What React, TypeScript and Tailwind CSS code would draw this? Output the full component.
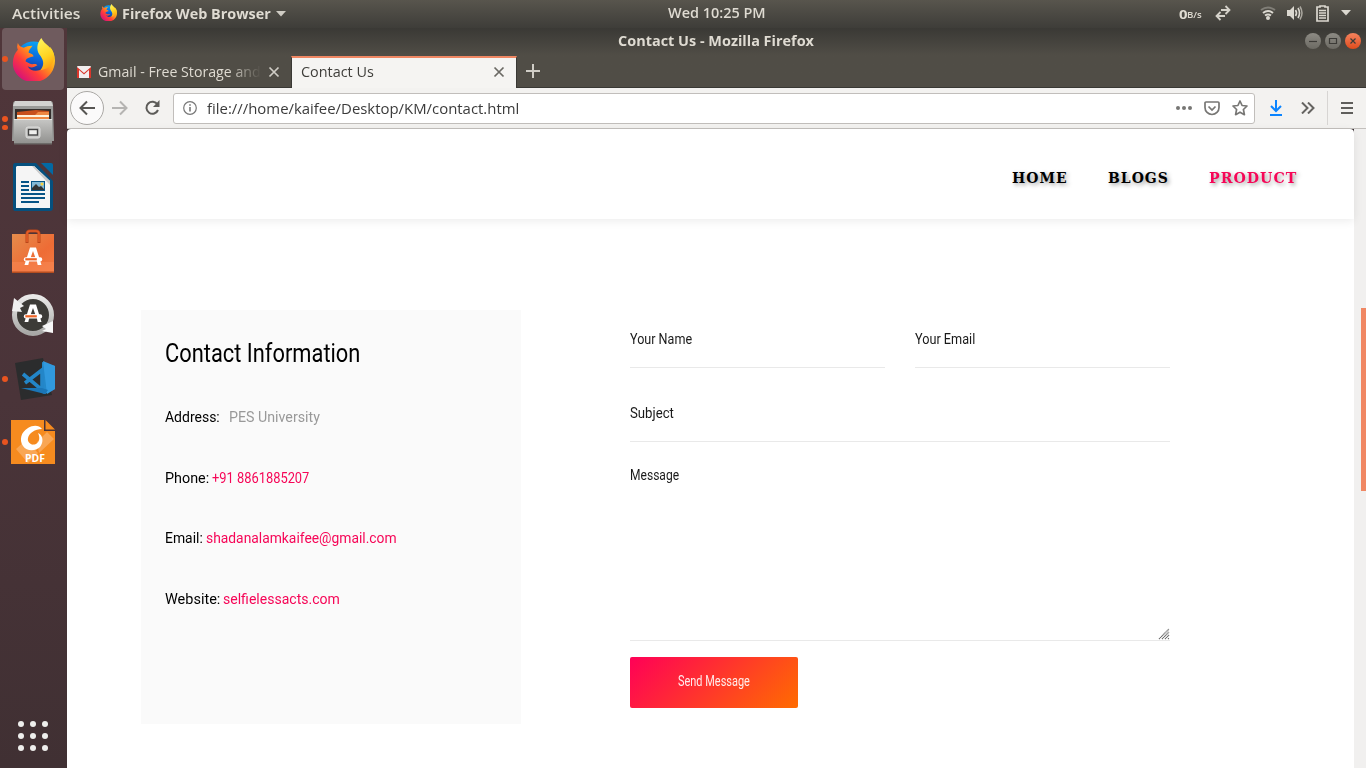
import { useLayoutEffect, useRef, useState } from 'react';
import type { ReactNode } from 'react';

/* Text set to an exact advance width by horizontal scaling. */
function Fit({ w, className = '', children }: { w: number; className?: string; children: ReactNode }) {
  const ref = useRef<HTMLSpanElement>(null);
  const [scale, setScale] = useState(1);
  useLayoutEffect(() => {
    if (ref.current && ref.current.offsetWidth) setScale(w / ref.current.offsetWidth);
  }, [w]);
  return (
    <span className={`block shrink-0 whitespace-pre ${className}`} style={{ width: w }}>
      <span ref={ref} className="inline-block origin-left" style={{ transform: `scaleX(${scale})` }}>
        {children}
      </span>
    </span>
  );
}

function FirefoxLogo({ size, id }: { size: number; id: string }) {
  return (
    <svg width={size} height={size} viewBox="0 0 44 44" className="shrink-0">
      <defs>
        <linearGradient id={`${id}a`} x1="0.9" y1="0.15" x2="0.15" y2="0.9">
          <stop offset="0" stopColor="#ffe226" />
          <stop offset="0.35" stopColor="#ff9a1a" />
          <stop offset="0.65" stopColor="#ff3d3a" />
          <stop offset="1" stopColor="#d6107a" />
        </linearGradient>
        <linearGradient id={`${id}b`} x1="0.6" y1="0" x2="0.4" y2="1">
          <stop offset="0" stopColor="#0aa5f5" />
          <stop offset="0.5" stopColor="#0a62d8" />
          <stop offset="1" stopColor="#2b1d6b" />
        </linearGradient>
        <linearGradient id={`${id}c`} x1="0.3" y1="0" x2="0.6" y2="1">
          <stop offset="0" stopColor="#fff45a" />
          <stop offset="0.6" stopColor="#ffd21f" />
          <stop offset="1" stopColor="#ff9b12" />
        </linearGradient>
      </defs>
      <circle cx="22" cy="22" r="18.5" fill={`url(#${id}b)`} />
      <path
        d="M6 5C5 9 5 10 6 12C1 17-1 27 3 34C7 42 15 45 22 45C35 45 44 35 44 23C44 18 42 13 39 9C40 17 38 26 33 30C28 35 19 35 16 29C19 31 23 30 26 28C24 25 21 28 18 26L14 24C14 21 17 20 22 19C22 16 19 16 17 15C17 12 19 11 21 8C17 8 14 9 12 10C9 9 7 8 6 5Z"
        fill={`url(#${id}a)`}
      />
      <path d="M30 0C25 6 25 12 28 17C32 22 34 27 29 33C38 32 44 26 43 18C42 9 33 7 30 0Z" fill={`url(#${id}c)`} />
    </svg>
  );
}

function Files() {
  return (
    <svg width="44" height="46" viewBox="0 0 44 46">
      <defs>
        <linearGradient id="cab" x1="0" y1="0" x2="0" y2="1">
          <stop offset="0" stopColor="#c7c7c5" />
          <stop offset="1" stopColor="#929290" />
        </linearGradient>
      </defs>
      <path d="M2 4Q2 1 5 1H39Q42 1 42 4L43 41H1Z" fill="#999a98" />
      <path d="M4 1H40L42 6H2Z" fill="#d2d2d0" />
      <rect x="4" y="9" width="36" height="11" fill="#332e2c" />
      <path d="M6 12L25 10L38 11V20H6Z" fill="#c8501d" />
      <path d="M6 15H24L27 12H38V20H6Z" fill="#ee8742" />
      <rect x="6" y="15" width="32" height="2" fill="#fff2dc" />
      <path d="M3 19H41V43H3Z" fill="url(#cab)" />
      <path d="M3 19.5H41" stroke="#e5e5e3" />
      <rect x="3" y="43" width="38" height="1.5" fill="#6d6b69" />
      <rect x="15" y="27" width="14" height="11" rx="2" fill="#c7c7c5" stroke="#dededd" />
      <rect x="17.5" y="29.5" width="9" height="5.5" fill="#efefed" stroke="#454545" strokeWidth="1.4" />
    </svg>
  );
}

function Writer() {
  return (
    <svg width="42" height="48" viewBox="0 0 42 48">
      <path d="M3 0H24L41 18V45Q41 48 38 48H3Q1 48 1 45V3Q1 0 3 0Z" fill="#05507e" />
      <path d="M29 0H39Q41 0 41 2V12Z" fill="#0369a3" />
      <path d="M5 3H22L38 18V45H4V4Z" fill="#f5f5f5" />
      <path d="M22 3L38 18V22L20 3Z" fill="#c9c9c9" />
      <g fill="#075486">
        <rect x="9" y="18" width="8" height="2" /><rect x="9" y="22" width="8" height="2" />
        <rect x="9" y="26" width="8" height="2" /><rect x="9" y="30" width="24" height="2" />
        <rect x="9" y="34" width="24" height="2" /><rect x="9" y="38" width="18" height="2" />
        <rect x="19" y="18" width="14" height="10" />
      </g>
      <rect x="20" y="19" width="12" height="8" fill="#84b9d6" />
      <circle cx="30" cy="21" r="1.5" fill="#f8d03c" />
      <path d="M20 27V25L24 21L27 24L29 23L32 26V27Z" fill="#333" />
    </svg>
  );
}

function StoreMark() {
  return (
    <>
      <path d="M-8.5 9L-3 -8.500H3L8.500 9H4.700L3.800 5H-3.800L-4.700 9ZM-2.300 1.500H2.300L0 -5Z" fill="#fff" />
      <rect x="-9.200" y="1.200" width="18.400" height="4.200" rx="2" fill="#fff" />
      <rect x="-7.700" y="2.200" width="11.500" height="2.200" fill="#ee6427" />
    </>
  );
}

function Software() {
  return (
    <svg width="44" height="46" viewBox="0 0 44 46" className="mt-[2px]">
      <defs>
        <linearGradient id="bag" x1="0" y1="0" x2="1" y2="1">
          <stop offset="0" stopColor="#e58c4c" />
          <stop offset="0.6" stopColor="#ee6c35" />
          <stop offset="1" stopColor="#f27a43" />
        </linearGradient>
      </defs>
      <rect x="1" y="5" width="42" height="39" fill="url(#bag)" />
      <rect x="1" y="33" width="42" height="10" fill="#fa8a55" opacity=".5" />
      <rect x="1" y="42.5" width="42" height="1.5" fill="#b44d20" />
      <path d="M16 14V5Q16 2 19 2H25Q28 2 28 5V14" fill="none" stroke="#b94619" strokeWidth="3" />
      <path d="M16 13V5Q16 2 19 2H25Q28 2 28 5V13" fill="none" stroke="#e35d28" strokeWidth="1.6" />
      <g transform="translate(22 27)"><StoreMark /></g>
    </svg>
  );
}

function Updater() {
  return (
    <svg width="44" height="44" viewBox="0 0 44 44">
      <defs>
        <linearGradient id="ring" x1="0" y1="0" x2="0" y2="1">
          <stop offset="0" stopColor="#e9e9e8" />
          <stop offset="1" stopColor="#a8a8a6" />
        </linearGradient>
      </defs>
      <circle cx="22" cy="22" r="18.500" fill="#3c3b37" stroke="url(#ring)" strokeWidth="5" />
      <path d="M3 5L13 13L9 15L11 19L1 18Z" fill="#f0f0f0" />
      <path d="M42 28V40L31 38L35 36L31 33Z" fill="#f7f7f7" />
      <g transform="translate(22 20)"><StoreMark /></g>
    </svg>
  );
}

function Code() {
  return (
    <svg width="42" height="44" viewBox="0 0 42 44">
      <path d="M1 6L29 1L38 38L7 43Z" fill="#2b2c2d" />
      <path d="M28 5L41 9V32L31 37L28 36Z" fill="#2489ca" />
      <path d="M29 4L41 9V32L33 37Z" fill="#3199de" />
      <path d="M11 26L28 13V33L9 17" fill="none" stroke="#2386c8" strokeWidth="3.6" />
      <path d="M7 31L31 37L34 33L28 31Z" fill="#1b76b7" />
    </svg>
  );
}

function Foxit() {
  return (
    <svg width="44" height="44" viewBox="0 0 44 44">
      <path d="M0 0H33V11H44V44H0Z" fill="#f68b1f" />
      <path d="M34.500 0L44 9.500H34.500Z" fill="#f68b1f" />
      <path d="M5 29L15 20L27 33L17 43ZM26 22L36 12L43 19L28 33Z" fill="#f9a654" />
      <path
        d="M31 9C28 5 22 5 17 8C10 12 8 20 12 26C16 32 25 31 29 27C33 22 32 15 27 13C29 17 29 22 25 24C20 26 16 22 17 18C18 13 24 9 31 9Z"
        fill="#fff"
      />
      <path d="M20 22C23 22 25 20 26 16C28 21 25 25 20 24Z" fill="#f68b1f" />
      <text x="14" y="42" textLength="20" lengthAdjust="spacingAndGlyphs" fill="#fff" fontSize="11" fontWeight="700" fontFamily="Open Sans, sans-serif">PDF</text>
    </svg>
  );
}

function DockItem({ dots = 0, active = false, height, children }: { dots?: number; active?: boolean; height: string; children: ReactNode }) {
  return (
    <div className={`relative flex w-[62px] items-center justify-center rounded ${height} ${active ? 'bg-[#6f5b5e]' : ''}`}>
      {dots > 0 && (
        <div className="absolute inset-y-0 left-0 flex flex-col justify-center gap-[3px]">
          {Array.from({ length: dots }, (_, i) => <i key={i} className="block size-[5.500px] rounded-full bg-[#e95420]" />)}
        </div>
      )}
      {children}
    </div>
  );
}

function Dock() {
  return (
    <aside className="flex w-[67px] shrink-0 flex-col bg-linear-to-b from-[#50363a] via-[#4a3439] to-[#403033] pl-[2px]">
      <DockItem height="h-[62px]" dots={1} active><FirefoxLogo size={43} id="dock" /></DockItem>
      <DockItem height="h-[66px]" dots={2}><Files /></DockItem>
      <DockItem height="h-[62px]"><span className="-ml-[1px]"><Writer /></span></DockItem>
      <DockItem height="h-[66px]"><Software /></DockItem>
      <DockItem height="h-[62px]"><Updater /></DockItem>
      <DockItem height="h-[66px]" dots={1}><span className="pl-1"><Code /></span></DockItem>
      <DockItem height="h-[60px]" dots={1}><Foxit /></DockItem>
      <div className="mt-auto mb-[17px] ml-4 grid w-[30px] grid-cols-3 gap-[6px]">
        {Array.from({ length: 9 }, (_, i) => <i key={i} className="block size-[6px] rounded-full bg-[#eeeeec]" />)}
      </div>
    </aside>
  );
}

function TopBar() {
  return (
    <header className="flex h-[28px] shrink-0 items-center bg-linear-to-b from-[#58554d] to-[#3e3d39] pb-[1px] text-[14px] font-semibold text-[#dfdbd2]">
      <Fit w={68} className="ml-3">Activities</Fit>
      <span className="-mt-[2px] mr-[5px] ml-5"><FirefoxLogo size={17} id="bar" /></span>
      <Fit w={149} className="font-bold">Firefox Web Browser</Fit>
      <svg className="ml-[5px]" width="10" height="6"><path d="M0 0H10L5 5.500Z" fill="#cfccc4" /></svg>
      <Fit w={98} className="ml-[382px] -mt-[2px]">Wed 10:25 PM</Fit>
      <div className="ml-auto flex items-center">
        <Fit w={8} className="mt-[3px] text-[13px] font-bold">0</Fit>
        <Fit w={15} className="mt-[3px] text-[9px]">B/s</Fit>
        <svg className="-mt-[1px] ml-[13px]" width="16" height="16" viewBox="0 0 16 16" fill="none" stroke="#d5d2ca" strokeWidth="1.8">
          <path d="M6 5H14M10.500 1L14.500 5L10.500 9M10 11H2M5.500 7L1.500 11L5.500 15" />
        </svg>
        <svg className="-mt-[1px] ml-[29px]" width="16" height="16" viewBox="0 0 16 16" fill="none" strokeWidth="2">
          <path d="M1 5Q8 0 15 5" stroke="#807e77" />
          <path d="M3 8Q8 4 13 8M5 10.500Q8 8.500 11 10.500" stroke="#dbd8d0" />
          <circle cx="8" cy="13" r="2" fill="#dbd8d0" />
        </svg>
        <svg className="-mt-[1px] ml-[11px]" width="17" height="16" viewBox="0 0 17 16">
          <path d="M0 5H3L7 1V15L3 11H0Z" fill="#dbd8d0" />
          <path d="M8.500 5Q10.500 8 8.500 11M11 3Q14 8 11 13" fill="none" stroke="#dbd8d0" strokeWidth="1.6" />
          <path d="M13 1.500Q17 8 13 14.500" fill="none" stroke="#aaa79f" strokeWidth="1.5" />
        </svg>
        <svg className="-mt-[1px] ml-[12px]" width="13" height="17" viewBox="0 0 13 17">
          <path d="M4 2V1H9V2H12V16H1V2Z" fill="none" stroke="#dbd8d0" strokeWidth="1.700" />
          <path d="M3 5.500H10M3 8H10M3 10.500H10M3 13H10" stroke="#dbd8d0" strokeWidth="1.4" />
        </svg>
        <svg className="-mt-[1px] ml-3 mr-[15px]" width="10" height="6"><path d="M0 0H10L5 5.500Z" fill="#dbd8d0" /></svg>
      </div>
    </header>
  );
}

function WindowButtons() {
  return (
    <div className="-mt-[2px] mr-[5px] ml-auto flex gap-1">
      {['min', 'max', 'close'].map((k) => (
        <span key={k} className={`flex size-4 items-center justify-center rounded-full ${k === 'close' ? 'bg-linear-to-b from-[#f4825c] to-[#df4b18]' : 'bg-linear-to-b from-[#8d8b84] to-[#6c6a63]'}`}>
          <svg width="10" height="10" viewBox="0 0 10 10" fill="none" stroke="#3c3b37" strokeWidth="1.2">
            <path d={k === 'min' ? 'M1 5.500H9' : k === 'max' ? 'M1.500 2.500H8.500V7.500H1.500Z' : 'M2.500 2.500L7.500 7.500M7.500 2.500L2.500 7.500'} />
          </svg>
        </span>
      ))}
    </div>
  );
}

function Close({ color }: { color: string }) {
  return (
    <svg width="12" height="12" viewBox="0 0 12 12" fill="none" stroke={color} strokeWidth="1.700">
      <path d="M1.500 1.500L10.500 10.500M10.500 1.500L1.500 10.500" />
    </svg>
  );
}

function Tabs() {
  return (
    <div className="flex h-[32px] text-[14px]">
      <div className="flex w-[224px] shrink-0 items-center border-b border-[#393834] pl-[10px]">
        <svg width="14" height="12" viewBox="0 0 14 12">
          <rect width="14" height="12" rx="1" fill="#f1eeee" />
          <path d="M0 1L7 7L14 1V12H12V4L7 8.500L2 4V12H0Z" fill="#d9362b" />
        </svg>
        <div className="ml-[7px] mask-r-from-80% mask-r-to-100%">
          <Fit w={163} className="text-[#dfdbd2]">Gmail - Free Storage and</Fit>
        </div>
        <span className="ml-[7px]"><Close color="#d0cdc6" /></span>
      </div>
      <div className="flex w-[226px] shrink-0 items-center border-x border-t-2 border-x-[#393834] border-t-[#f08763] bg-[#f5f4f2] pb-[3px] pl-[9px] text-[#3f3e3a]">
        <Fit w={73}>Contact Us</Fit>
        <span className="mt-[1px] ml-[119px]"><Close color="#6b6964" /></span>
      </div>
      <div className="flex grow items-center border-b border-[#393834] pb-[1px] pl-[9px]">
        <svg width="14" height="14"><path d="M7 0V14M0 7H14" stroke="#d0cdc6" strokeWidth="2" /></svg>
      </div>
    </div>
  );
}

function Toolbar() {
  return (
    <div className="flex h-[41px] shrink-0 items-center border-b border-[#c3c0bd] bg-[#f3f2f0] pl-[3px]">
      <span className="flex size-[34px] shrink-0 items-center justify-center rounded-full border border-[#aaa8a5] bg-[#fbfafa]">
        <svg width="16" height="16" viewBox="0 0 16 16" fill="none" stroke="#575653" strokeWidth="2"><path d="M16 8H2M8 1.500L1.500 8L8 14.500" /></svg>
      </span>
      <svg className="ml-2" width="16" height="16" viewBox="0 0 16 16" fill="none" stroke="#b5b4b2" strokeWidth="2"><path d="M0 8H14M8 1.500L14.500 8L8 14.500" /></svg>
      <svg className="ml-4" width="17" height="16" viewBox="0 0 17 16" fill="none" stroke="#5c5b58" strokeWidth="2">
        <path d="M13.500 4.500A6 6 0 1 0 14 10" />
        <path d="M15.500 0V7H9Z" fill="#5c5b58" stroke="none" />
      </svg>
      <div className="ml-[12px] flex h-[31px] w-[1082px] shrink-0 items-center rounded-[3px] border border-[#c1bebb] bg-white pl-[9px] text-[14.500px] text-[#3b3b3b]">
        <svg width="14" height="14" viewBox="0 0 14 14" fill="none" stroke="#777">
          <circle cx="7" cy="7" r="6.300" strokeWidth="1.200" />
          <path d="M7 6V10.500M7 3.200V4.700" strokeWidth="1.600" />
        </svg>
        <Fit w={312.5} className="mt-[2px] ml-[10px]">file:///home/kaifee/Desktop/KM/contact.html</Fit>
        <svg className="ml-auto" width="16" height="4" fill="#777674"><circle cx="2" cy="2" r="2" /><circle cx="8" cy="2" r="2" /><circle cx="14" cy="2" r="2" /></svg>
        <svg className="ml-3" width="16" height="15" viewBox="0 0 16 15" fill="none" stroke="#777674" strokeWidth="1.700">
          <path d="M2 1H14Q15 1 15 2V6.500A7 7 0 0 1 1 6.500V2Q1 1 2 1ZM4.500 5.500L8 9L11.500 5.500" />
        </svg>
        <svg className="mr-[6px] ml-3" width="16" height="16" viewBox="0 0 16 16" fill="none" stroke="#777674" strokeWidth="1.700" strokeLinejoin="round">
          <path d="M8 1L10.100 5.500L15 6L11.400 9.500L12.400 14.700L8 12.200L3.600 14.700L4.600 9.500L1 6L5.900 5.500Z" />
        </svg>
      </div>
      <svg className="ml-[15px]" width="12" height="16" viewBox="0 0 12 16" fill="none" stroke="#0a84ff" strokeWidth="2"><path d="M6 0V11M1 6L6 11L11 6M0 15H12" /></svg>
      <svg className="ml-[19px]" width="14" height="12" viewBox="0 0 14 12" fill="none" stroke="#656461" strokeWidth="2"><path d="M1 0.500L6.500 6L1 11.500M7 0.500L12.500 6L7 11.500" /></svg>
      <div className="ml-[12px] h-[34px] w-px bg-[#d7d5d3]" />
      <svg className="ml-[13px]" width="12" height="12"><path d="M0 1H12M0 6H12M0 11H12" stroke="#5f5e5b" strokeWidth="2" /></svg>
    </div>
  );
}

function InfoRow({ label, w, value, vw, gap = 'ml-[3px]', tone = 'text-[#f60657]' }: { label: string; w: number; value: string; vw: number; gap?: string; tone?: string }) {
  return (
    <div className="mb-[36.600px] flex h-6 items-center text-[15px] leading-6 text-black">
      <Fit w={w}>{label}</Fit>
      <Fit w={vw} className={`${gap} ${tone}`}>{value}</Fit>
    </div>
  );
}

function Page() {
  return (
    <main className="flex min-h-0 grow bg-[#f1f0ef] font-[Roboto,sans-serif]">
      <div className="flex w-[1287px] flex-col bg-white">
        <div className="bg-linear-to-r from-[#3a3033] to-[#3a3033]">
          <nav className="flex h-[90px] items-center justify-end gap-[40px] rounded-t-[4px] bg-white pt-2 pr-[57px] font-['DejaVu_Serif',serif] text-[14px] font-bold tracking-[1px] text-black shadow-[0_2px_10px_rgba(0,0,0,0.08)] [text-shadow:2px_2px_4px_rgba(0,0,0,0.4)]">
            <Fit w={56}>HOME</Fit>
            <Fit w={61}>BLOGS</Fit>
            <Fit w={88} className="text-[#f60657]">PRODUCT</Fit>
          </nav>
        </div>
        <div className="flex pt-[91px] pl-[74px]">
          <section className="h-[414px] w-[380px] bg-[#fafafa] pt-[29px] pl-6">
            <Fit w={195} className="mb-[36px] h-[30px] text-[25px] leading-[30px] text-black">Contact Information</Fit>
            <InfoRow label="Address:" w={55} value="PES University" vw={91} gap="ml-[9px]" tone="text-[#999999]" />
            <InfoRow label="Phone:" w={44} value="+91 8861885207" vw={97} />
            <InfoRow label="Email:" w={38} value="shadanalamkaifee@gmail.com" vw={191} />
            <InfoRow label="Website:" w={55} value="selfielessacts.com" vw={117} />
          </section>
          <section className="ml-[109px] w-[540px] text-[15px] leading-5 text-[#1a1a1a]">
            <div className="flex gap-[30px]">
              <div className="h-[58px] w-[255px] border-b border-[#e9e9e9] pt-[19px]"><Fit w={62}>Your Name</Fit></div>
              <div className="h-[58px] w-[255px] border-b border-[#e9e9e9] pt-[19px]"><Fit w={60}>Your Email</Fit></div>
            </div>
            <div className="mt-[16px] h-[58px] border-b border-[#e9e9e9] pt-[19px]"><Fit w={44}>Subject</Fit></div>
            <div className="flex h-[199px] flex-col justify-between border-b border-[#e9e9e9] pt-[23px]">
              <Fit w={49}>Message</Fit>
              <svg className="ml-auto" width="12" height="12" stroke="#6a6a6a" strokeWidth="1.200" strokeDasharray="1.200 .35"><path d="M1 11L11 1M4 11L11 4M7 11L11 7M10 11L11 10" /></svg>
            </div>
            <button className="mt-4 flex h-[51px] w-[168px] items-center justify-center rounded-[2px] bg-[linear-gradient(135deg,#ff0057_0%,#ff6c00_100%)] pb-[3px] text-[14px] text-white/90">
              <Fit w={72} className="text-left">Send Message</Fit>
            </button>
          </section>
        </div>
      </div>
      <div className="flex grow flex-col items-end pt-[179px]"><div className="h-[183px] w-[5px] bg-[#f08763]" /></div>
    </main>
  );
}

export default function App() {
  return (
    <div className="flex h-[768px] w-[1366px] flex-col overflow-hidden font-['Open_Sans',sans-serif]">
      <TopBar />
      <div className="flex min-h-0 grow">
        <Dock />
        <div className="flex w-[1299px] flex-col">
          <div className="h-[60px] shrink-0 bg-linear-to-b from-[#3a3935] to-[#504d46] to-45%">
            <div className="flex h-[28px] items-center pl-[551px]">
              <Fit w={196} className="-mt-[4px] text-[14px] font-bold text-[#dfdbd2]">Contact Us - Mozilla Firefox</Fit>
              <WindowButtons />
            </div>
            <Tabs />
          </div>
          <Toolbar />
          <Page />
        </div>
      </div>
    </div>
  );
}
